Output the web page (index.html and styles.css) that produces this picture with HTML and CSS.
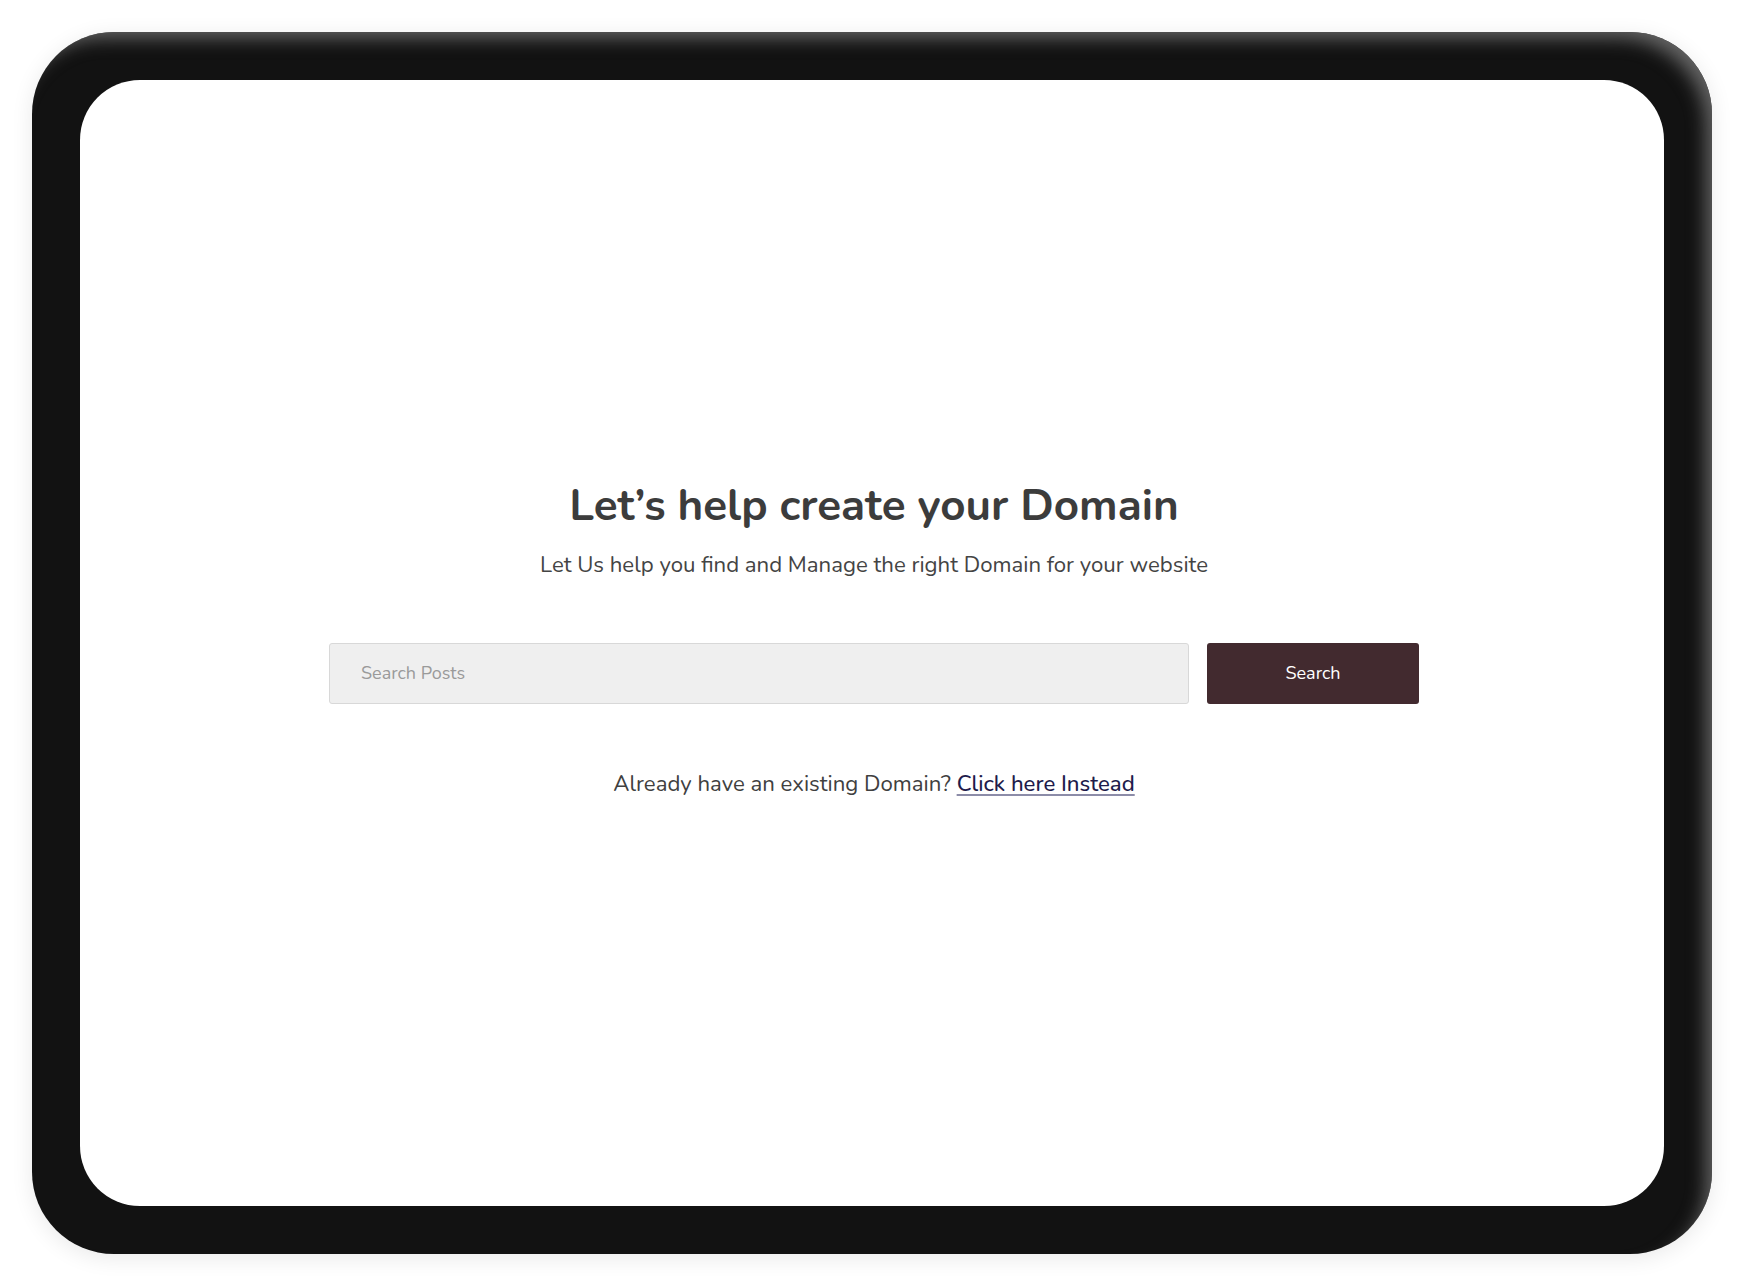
FILE: index.html
```html
<!DOCTYPE html>
<html lang="en">
<head>
<meta charset="utf-8">
<title>Domain</title>
<link rel="stylesheet" href="styles.css">
</head>
<body>
<div class="page">
  <div class="device">
    <div class="screen">
      <div class="content">
        <h1 class="title">Let’s help create your Domain</h1>
        <p class="subtitle">Let Us help you find and Manage the right Domain for your website</p>
        <form class="search">
          <input class="search-input" type="text" placeholder="Search Posts">
          <button class="search-btn" type="button">Search</button>
        </form>
        <p class="existing">Already have an existing Domain? <a class="link" href="#">Click here Instead</a></p>
      </div>
    </div>
  </div>
</div>
</body>
</html>
```
FILE: styles.css
```css
html, body {
  margin: 0;
  padding: 0;
  background: #ffffff;
}
body {
  width: 1744px;
  height: 1287px;
  overflow: hidden;
  font-family: "Nunito", "Lato", "Noto Sans", sans-serif;
}
.page {
  padding: 32px;
}
.device {
  width: 1680px;
  height: 1222px;
  box-sizing: border-box;
  padding: 48px;
  border-radius: 82px;
  background: #121212;
  box-shadow: inset -12px 12px 18px -6px rgba(105, 105, 105, 0.95), 0 4px 22px rgba(0, 0, 0, 0.09);
}
.screen {
  width: 100%;
  height: 100%;
  box-sizing: border-box;
  padding-top: 400px;
  padding-left: 4px;
  background: #ffffff;
  border-radius: 60px;
  display: flex;
  flex-direction: column;
  align-items: center;
}
.content {
  display: flex;
  flex-direction: column;
  align-items: center;
  width: 1090px;
}
.title {
  margin: 0;
  font-size: 44px;
  font-weight: 700;
  color: #3c3c3c;
  line-height: 1.2;
}
.subtitle {
  margin: 17px 0 0;
  font-size: 22.2px;
  color: #444444;
  line-height: 1.4;
}
.search {
  margin-top: 62px;
  display: flex;
  gap: 18px;
  width: 100%;
  height: 61px;
}
.search-input {
  flex: 1;
  box-sizing: border-box;
  height: 61px;
  padding: 0 31px;
  background: #efefef;
  border: 1px solid #d8d8d8;
  border-radius: 3px;
  font-family: inherit;
  font-size: 18px;
  color: #444;
  outline: none;
}
.search-input::placeholder {
  color: #9a9a9a;
}
.search-btn {
  width: 212px;
  height: 61px;
  border: none;
  border-radius: 3px;
  background: #422a2f;
  color: #ffffff;
  font-family: inherit;
  font-size: 18px;
  cursor: pointer;
}
.existing {
  margin: 65px 0 0;
  font-size: 22.2px;
  color: #404040;
  line-height: 1.4;
}
.link {
  color: #1e1b4b;
  font-weight: 500;
  text-decoration: underline;
  text-decoration-color: #8c8ca8;
  text-underline-offset: 3px;
  text-decoration-thickness: 2px;
}
```
